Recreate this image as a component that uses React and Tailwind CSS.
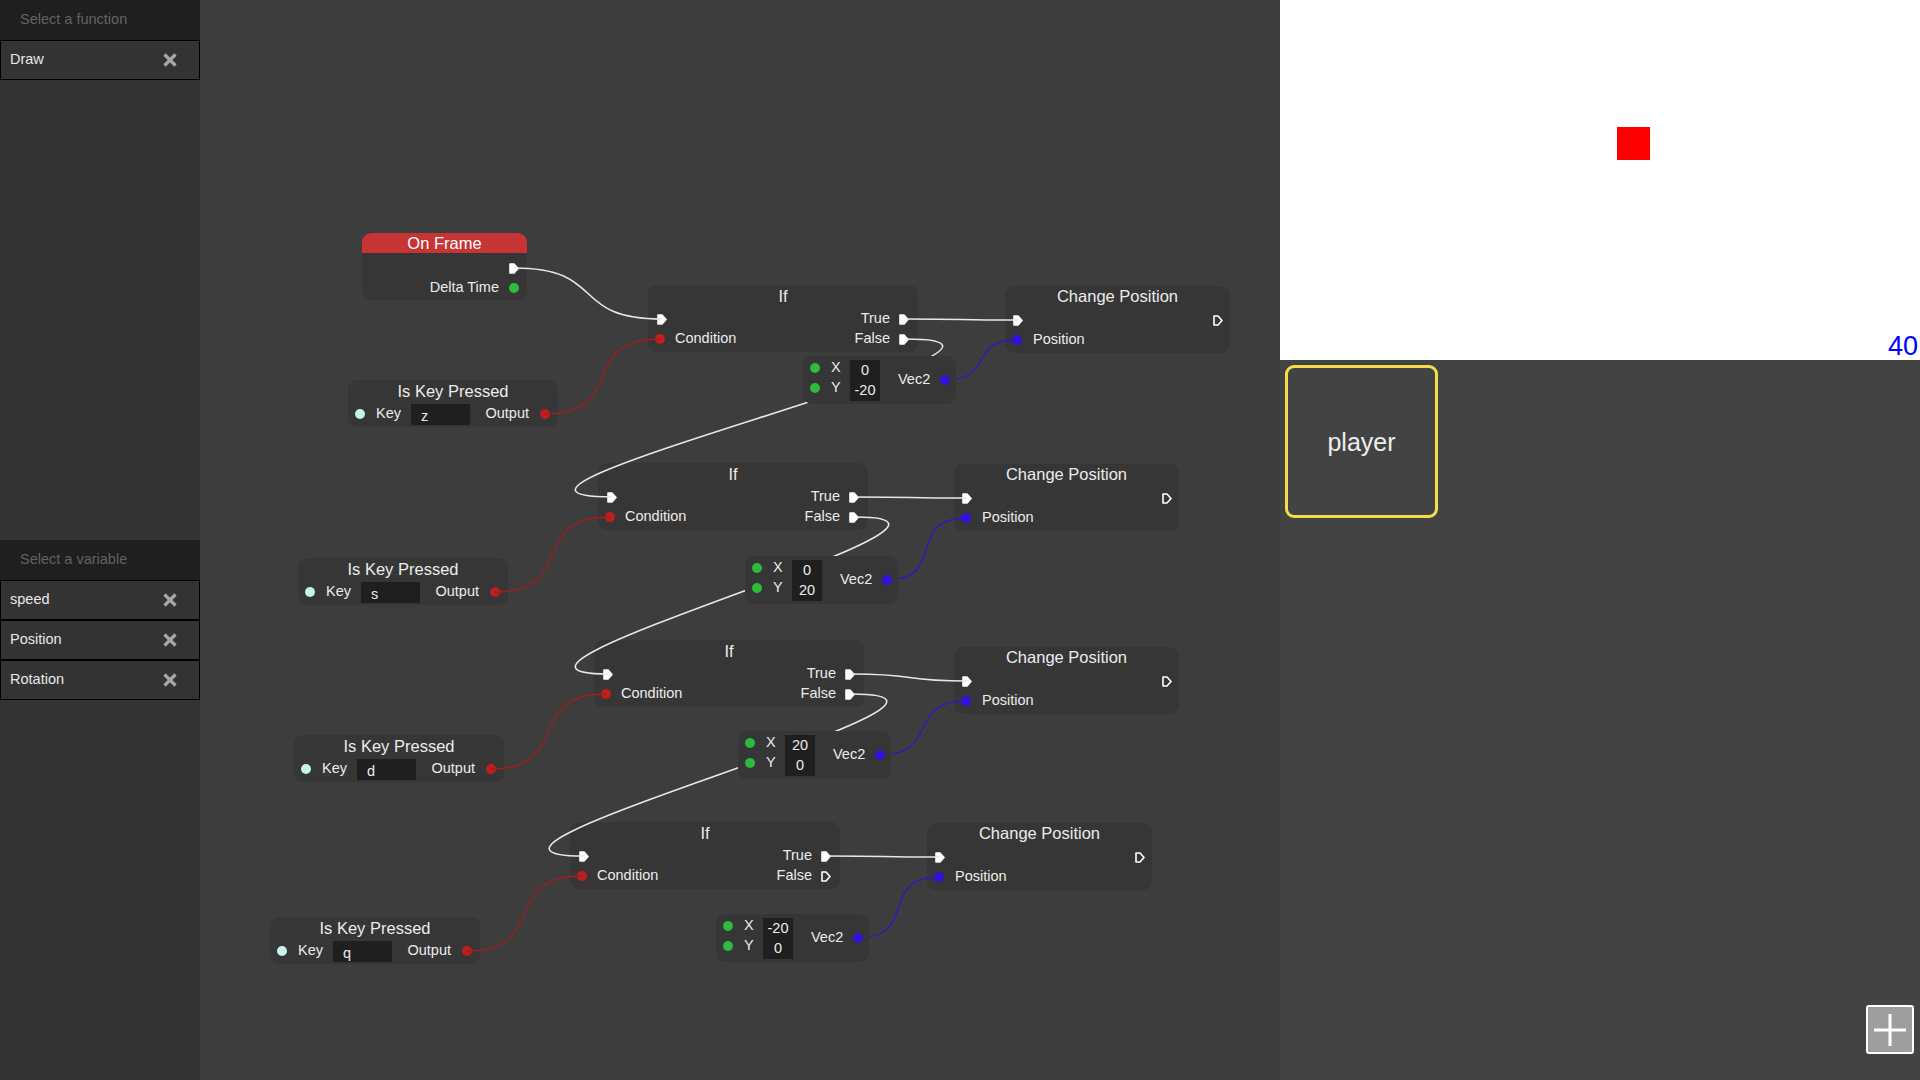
import React from 'react';

// page-space coordinates; the canvas starts at x = 200
const CANVAS_LEFT = 200;

const GROUPS = [
  { ifAt: [648, 285], cp: [1005, 286], vec: [803, 356], xy: ['0', '-20'], key: [348, 380], letter: 'z', falseLinked: true },
  { ifAt: [598, 463], cp: [954, 464], vec: [745, 556], xy: ['0', '20'], key: [298, 558], letter: 's', falseLinked: true },
  { ifAt: [594, 640], cp: [954, 647], vec: [738, 731], xy: ['20', '0'], key: [294, 735], letter: 'd', falseLinked: true },
  { ifAt: [570, 822], cp: [927, 823], vec: [716, 914], xy: ['-20', '0'], key: [270, 917], letter: 'q', falseLinked: false },
];

const ON_FRAME = [362, 233];

const pos = ([x, y]) => ({ left: x - CANVAS_LEFT, top: y });

function ExecArrow({ filled = true }) {
  return (
    <svg width="10" height="11" viewBox="0 0 10 11" className="shrink-0">
      <path
        d="M1 1 H5 L9 5.5 L5 10 H1 Z"
        fill={filled ? '#ffffff' : 'none'}
        stroke="#ffffff"
        strokeWidth="1.6"
        strokeLinejoin="round"
      />
    </svg>
  );
}

function Dot({ className }) {
  return <span className={`block w-[10px] h-[10px] rounded-full shrink-0 ${className}`} />;
}

function CloseIcon() {
  return (
    <svg width="14" height="14" viewBox="0 0 14 14">
      <path d="M1.5 1.5 L12.5 12.5 M12.5 1.5 L1.5 12.5" stroke="#a8a8a8" strokeWidth="3.2" />
    </svg>
  );
}

function SideItem({ label }) {
  return (
    <div className="h-10 border border-black bg-[#333333] flex items-center pl-[9px] pr-[22px] text-[14.5px] text-[#e8e8e8]">
      <span>{label}</span>
      <span className="ml-auto">
        <CloseIcon />
      </span>
    </div>
  );
}

function SideHeader({ children }) {
  return (
    <div className="h-10 bg-[#1f1f1f] flex items-center pl-5 text-[14.5px] text-[#626262]">{children}</div>
  );
}

function OnFrameNode() {
  return (
    <div className="absolute w-[165px] h-[67px] rounded-[9px] bg-[#363636] text-[#ececec]" style={pos(ON_FRAME)}>
      <div className="h-5 rounded-t-[9px] bg-[#c73434] flex items-center justify-center text-[16.5px] text-white">
        On Frame
      </div>
      <div className="mt-[5px] h-5 flex items-center justify-end pr-[8px]">
        <ExecArrow />
      </div>
      <div className="h-5 flex items-center justify-end pr-[8px] text-[14.5px]">
        <span className="mr-[10px]">Delta Time</span>
        <Dot className="bg-[#2cbb3c]" />
      </div>
    </div>
  );
}

function IfNode({ at, falseLinked }) {
  return (
    <div className="absolute w-[270px] h-[67px] rounded-[9px] bg-[#363636] text-[#ececec]" style={pos(at)}>
      <div className="h-[22px] flex items-center justify-center text-[16.5px]">If</div>
      <div className="mt-[2px] h-5 flex items-center pl-[9px] pr-[9px] text-[14.5px]">
        <ExecArrow />
        <span className="ml-auto mr-[9px]">True</span>
        <ExecArrow />
      </div>
      <div className="h-5 flex items-center pl-[7px] pr-[9px] text-[14.5px]">
        <Dot className="bg-[#c01e1e]" />
        <span className="ml-[10px]">Condition</span>
        <span className="ml-auto mr-[9px]">False</span>
        <ExecArrow filled={falseLinked} />
      </div>
    </div>
  );
}

function ChangePositionNode({ at }) {
  return (
    <div className="absolute w-[225px] h-[67px] rounded-[9px] bg-[#363636] text-[#ececec]" style={pos(at)}>
      <div className="h-5 flex items-center justify-center text-[16.5px]">Change Position</div>
      <div className="mt-[4px] h-5 flex items-center pl-[8px] pr-[7px]">
        <ExecArrow />
        <span className="ml-auto">
          <ExecArrow filled={false} />
        </span>
      </div>
      <div className="h-5 flex items-center pl-[7px] text-[14.5px]">
        <Dot className="bg-[#3310dc]" />
        <span className="ml-[11px]">Position</span>
      </div>
    </div>
  );
}

function KeyPressedNode({ at, letter }) {
  return (
    <div className="absolute w-[210px] h-[47px] rounded-[9px] bg-[#363636] text-[#ececec]" style={pos(at)}>
      <div className="h-[22px] flex items-center justify-center text-[16.5px]">Is Key Pressed</div>
      <div className="mt-[1px] h-[22px] flex items-center pl-[7px] pr-[8px] text-[14.5px]">
        <Dot className="bg-[#c6f3ec]" />
        <span className="ml-[11px] w-[35px]">Key</span>
        <span className="w-[59px] h-[21px] bg-[#1f1f1f] pl-[10px] pt-[3px] leading-[18px]">{letter}</span>
        <span className="ml-auto mr-[11px]">Output</span>
        <Dot className="bg-[#c01e1e]" />
      </div>
    </div>
  );
}

function Vec2Node({ at, xy }) {
  return (
    <div className="absolute w-[153px] h-[48px] rounded-[9px] bg-[#363636] text-[#ececec] flex text-[14.5px]" style={pos(at)}>
      <div className="flex flex-col pt-[2px] pl-[7px]">
        <div className="h-5 flex items-center">
          <Dot className="bg-[#2cbb3c]" />
          <span className="ml-[11px] w-[19px]">X</span>
        </div>
        <div className="h-5 flex items-center">
          <Dot className="bg-[#2cbb3c]" />
          <span className="ml-[11px] w-[19px]">Y</span>
        </div>
      </div>
      <div className="mt-[4px] w-[30px] h-[41px] bg-[#1f1f1f] pt-[1px] flex flex-col">
        <span className="h-5 flex items-center justify-center">{xy[0]}</span>
        <span className="h-5 flex items-center justify-center">{xy[1]}</span>
      </div>
      <div className="flex items-center">
        <span className="ml-[18px] w-[42px]">Vec2</span>
        <Dot className="bg-[#3310dc]" />
      </div>
    </div>
  );
}

function curve([x0, y0], [x1, y1]) {
  const dist = Math.hypot(x1 - x0, y1 - y0);
  const c = dist * 0.6;
  return `M${x0} ${y0} C${x0 + c} ${y0}, ${x1 - c} ${y1}, ${x1} ${y1}`;
}

function buildWires() {
  const white = [];
  const red = [];
  const blue = [];
  const ifIn = ([x, y]) => [x + 14, y + 34];

  white.push(curve([ON_FRAME[0] + 152, ON_FRAME[1] + 35], ifIn(GROUPS[0].ifAt)));

  GROUPS.forEach((g, i) => {
    const [ix, iy] = g.ifAt;
    const [cx, cy] = g.cp;
    const [vx, vy] = g.vec;
    const [kx, ky] = g.key;
    white.push(curve([ix + 258, iy + 34], [cx + 13, cy + 34]));
    if (g.falseLinked && GROUPS[i + 1]) {
      white.push(curve([ix + 258, iy + 54], ifIn(GROUPS[i + 1].ifAt)));
    }
    red.push(curve([kx + 197, ky + 34], [ix + 12, iy + 54]));
    blue.push(curve([vx + 142, vy + 24], [cx + 12, cy + 54]));
  });

  return { white, red, blue };
}

function Wires() {
  const { white, red, blue } = buildWires();
  return (
    <svg className="absolute inset-0 pointer-events-none" width="1080" height="1080" viewBox="200 0 1080 1080">
      {red.map((d, i) => (
        <path key={`r${i}`} d={d} fill="none" stroke="#a51c1c" strokeWidth="1.3" />
      ))}
      {blue.map((d, i) => (
        <path key={`b${i}`} d={d} fill="none" stroke="#3414c8" strokeWidth="1.3" />
      ))}
      {white.map((d, i) => (
        <path key={`w${i}`} d={d} fill="none" stroke="#e8e8e8" strokeWidth="1.6" />
      ))}
    </svg>
  );
}

export default function App() {
  return (
    <div className="flex w-[1920px] h-[1080px] overflow-hidden font-['Liberation_Sans',Arial,sans-serif] bg-[#3d3d3d]">
      {/* left sidebar */}
      <aside className="w-[200px] h-full bg-[#333333] flex flex-col shrink-0">
        <SideHeader>Select a function</SideHeader>
        <SideItem label="Draw" />
        <div className="h-[460px]" />
        <SideHeader>Select a variable</SideHeader>
        <SideItem label="speed" />
        <SideItem label="Position" />
        <SideItem label="Rotation" />
      </aside>

      {/* node canvas */}
      <main className="relative w-[1080px] h-full bg-[#3d3d3d] shrink-0">
        <OnFrameNode />
        {GROUPS.map((g, i) => (
          <React.Fragment key={i}>
            <IfNode at={g.ifAt} falseLinked={g.falseLinked} />
            <ChangePositionNode at={g.cp} />
            <KeyPressedNode at={g.key} letter={g.letter} />
          </React.Fragment>
        ))}
        <Wires />
        {GROUPS.map((g, i) => (
          <Vec2Node key={i} at={g.vec} xy={g.xy} />
        ))}
      </main>

      {/* preview + objects */}
      <section className="w-[640px] h-full flex flex-col shrink-0">
        <div className="relative h-[360px] bg-white overflow-hidden">
          <div className="absolute left-[337px] top-[127px] w-[33px] h-[33px] bg-[#ff0000]" />
          <span className="absolute right-[2px] top-[334px] text-[27px] leading-[24px] text-[#0000ff]">40</span>
        </div>
        <div className="relative flex-1 bg-[#434343] p-[5px]">
          <div className="w-[153px] h-[153px] border-[3px] border-[#f4de4c] rounded-[9px] flex items-center justify-center pt-[2px] text-[25px] text-[#eeeeee]">
            player
          </div>
          <button className="absolute right-[6px] bottom-[26px] w-[48px] h-[49px] bg-[#9e9e9e] border-2 border-white rounded-[3px] flex items-center justify-center">
            <svg width="32" height="32" viewBox="0 0 32 32">
              <path d="M16 0 V32 M0 16 H32" stroke="#ffffff" strokeWidth="3" />
            </svg>
          </button>
        </div>
      </section>
    </div>
  );
}
